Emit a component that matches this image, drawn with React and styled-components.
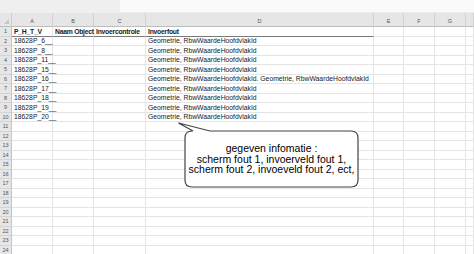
import styled, { createGlobalStyle } from "styled-components";

const GlobalStyle = createGlobalStyle`
  html, body { margin: 0; padding: 0; background: #fff; overflow: hidden; }
  body { font-family: "Liberation Sans", Arial, sans-serif; }
  * { box-sizing: border-box; }
`;

const Page = styled.div`
  position: relative;
  width: 474px;
  height: 254px;
  overflow: hidden;
  background: #fff;
`;

const TopBand = styled.div`
  display: flex;
  height: 13px;
`;

const NameBox = styled.div`
  width: 120px;
  background: #efefef;
`;

const FormulaBox = styled.div`
  flex: 1;
  background: #fafafa;
  border-bottom: 1px solid #ececec;
`;

const Sheet = styled.div`
  display: grid;
  grid-template-columns: 12px 41px 41px 52px 228px 30px 31px 31px 8px;
  grid-template-rows: 14px;
  grid-auto-rows: 9.5px;
`;

const Corner = styled.div`
  position: relative;
  background: #e6e6e6;
  border-right: 1px solid #cfcfcf;
  border-bottom: 1px solid #bdbdbd;
  &::after {
    content: "";
    position: absolute;
    right: 2px;
    bottom: 2px;
    border-left: 5px solid transparent;
    border-bottom: 5px solid #c6c6c6;
  }
`;

const ColHead = styled.div`
  background: #e6e6e6;
  border-right: 1px solid #d2d2d2;
  border-bottom: 1px solid #bdbdbd;
  display: flex;
  align-items: center;
  justify-content: center;
  padding-top: 2px;
  font-size: 5.5px;
  color: #555;
`;

const RowHead = styled.div`
  background: #e6e6e6;
  border-right: 1px solid #c4c4c4;
  border-bottom: 1px solid #d4d4d4;
  display: flex;
  align-items: center;
  justify-content: center;
  font-size: 5.5px;
  color: #555;
`;

const Cell = styled.div`
  border-right: 1px solid #e4e4e4;
  border-bottom: 1px solid ${(p) => (p.$head ? "#7a7a7a" : "#e4e4e4")};
  display: flex;
  align-items: center;
  padding-left: 2px;
  font-size: 6.8px;
  font-weight: ${(p) => (p.$head ? 700 : 400)};
  letter-spacing: ${(p) => (p.$head ? "-0.25px" : "0")};
  color: #1a1a1a;
  white-space: nowrap;
  overflow: visible;
`;

const Callout = styled.div`
  position: absolute;
  left: 178px;
  top: 122px;
  width: 182px;
  height: 67px;
  display: grid;
`;

const CalloutShape = styled.svg`
  grid-area: 1 / 1;
`;

const CalloutText = styled.div`
  grid-area: 1 / 1;
  padding: 9px 2px 2px 7px;
  display: flex;
  align-items: center;
  justify-content: center;
  text-align: center;
  font-family: "Liberation Sans", Arial, sans-serif;
  font-size: 10.5px;
  line-height: 10.5px;
  color: #000;
`;

const cols = ["A", "B", "C", "D", "E", "F", "G", ""];

const geo = "Geometrie, RbwWaardeHoofdvlakId";
const data = [
  ["P_H_T_V", "Naam Object", "Invoercontrole", "Invoerfout"],
  ["18628P_6__", "", "", geo],
  ["18628P_8__", "", "", geo],
  ["18628P_11__", "", "", geo],
  ["18628P_15__", "", "", geo],
  ["18628P_16__", "", "", geo + ". " + geo],
  ["18628P_17__", "", "", geo],
  ["18628P_18__", "", "", geo],
  ["18628P_19__", "", "", geo],
  ["18628P_20__", "", "", geo],
];

const App = () => {
  const rows = [];
  for (let r = 1; r <= 24; r++) {
    const vals = data[r - 1] || [];
    rows.push(<RowHead key={"h" + r}>{r}</RowHead>);
    for (let c = 0; c < 8; c++) {
      rows.push(
        <Cell key={r + "-" + c} $head={r === 1 && c < 4}>
          {vals[c] || ""}
        </Cell>
      );
    }
  }

  return (
    <>
      <GlobalStyle />
      <Page>
        <TopBand>
          <NameBox />
          <FormulaBox />
        </TopBand>
        <Sheet>
          <Corner />
          {cols.map((c, i) => (
            <ColHead key={i}>{c}</ColHead>
          ))}
          {rows}
        </Sheet>

        <Callout>
          <CalloutShape width="182" height="67" viewBox="0 0 182 67">
            <path
              d="M15 9 L0.5 1 L32 9 L173 9 Q180 9 180 16 L180 58 Q180 65 173 65 L14 65 Q7 65 7 58 L7 16 Q7 9 14 9 Z"
              fill="#fff"
              stroke="#444"
              strokeWidth="1.2"
            />
          </CalloutShape>
          <CalloutText>
            gegeven infomatie :
            <br />
            scherm fout 1, invoerveld fout 1,
            <br />
            scherm fout 2, invoeveld fout 2, ect,
          </CalloutText>
        </Callout>
      </Page>
    </>
  );
};

export default App;
